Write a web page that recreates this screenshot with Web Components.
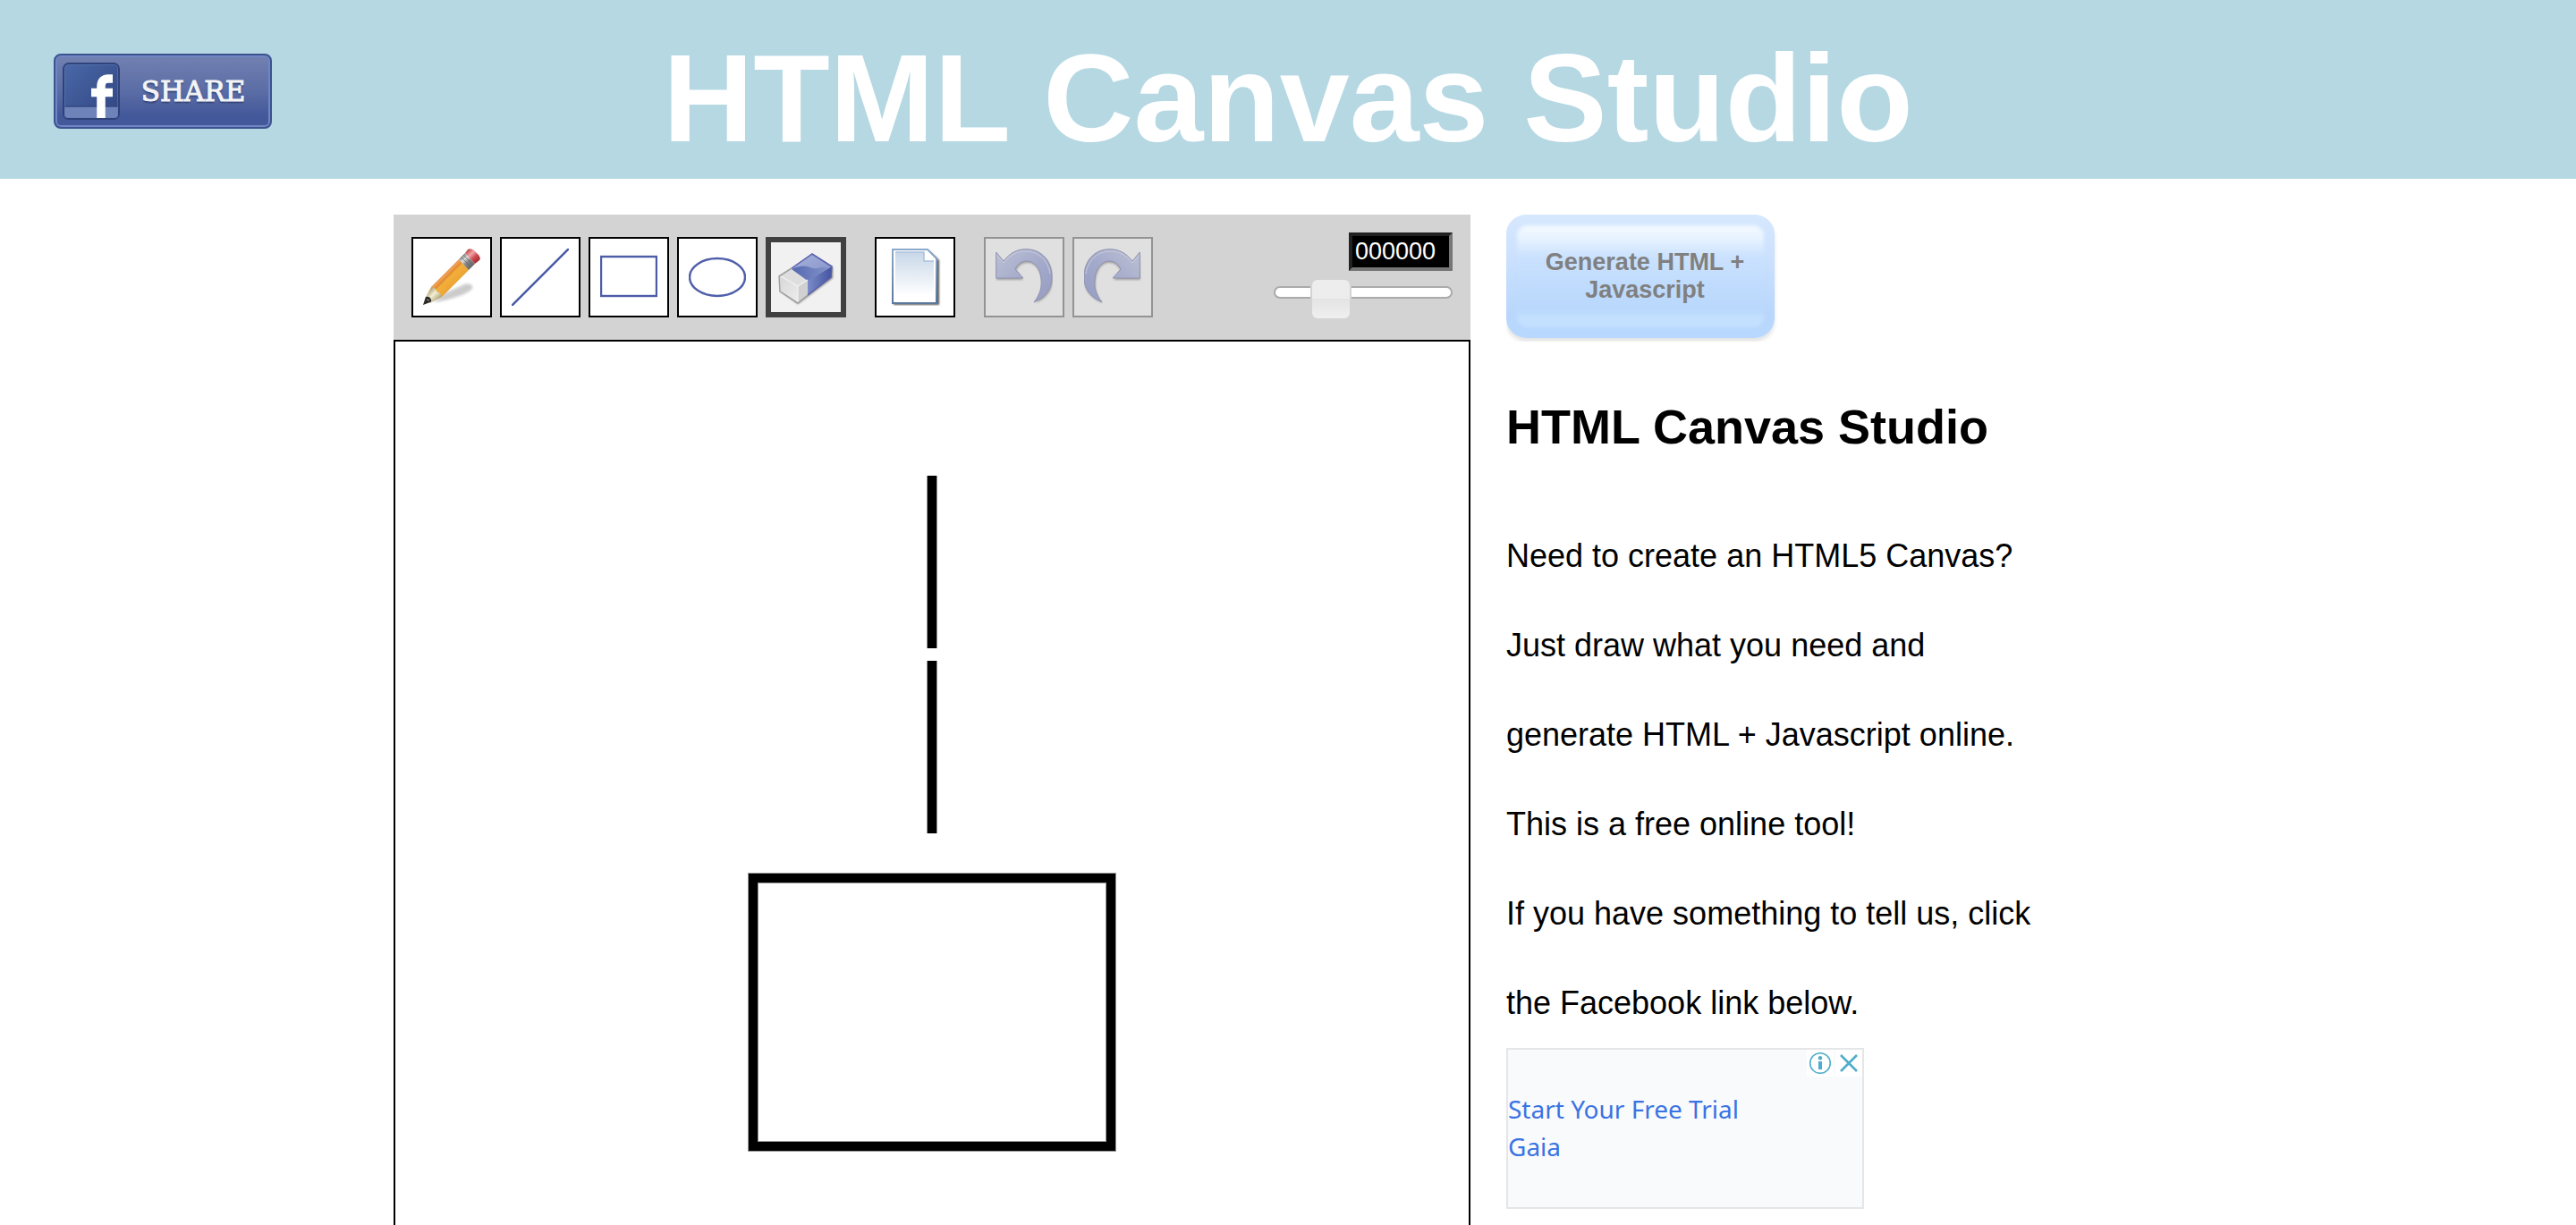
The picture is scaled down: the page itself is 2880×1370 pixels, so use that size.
<!DOCTYPE html>
<html lang="en">
<head>
<meta charset="utf-8">
<title>HTML Canvas Studio</title>
<style>
  html, body { height: 100%; }
  body { margin: 0; background: #fff; color: #000; font-family: "Liberation Sans", Arial, sans-serif; }
</style>
</head>
<body>
<studio-app></studio-app>

<script>
const define = (name, html) => {
  const template = document.createElement('template');
  template.innerHTML = html;
  customElements.define(name, class extends HTMLElement {
    constructor() {
      super();
      this.attachShadow({ mode: 'open' }).append(template.content.cloneNode(true));
    }
    connectedCallback() {
      const label = this.getAttribute('label');
      const button = this.shadowRoot.querySelector('button');
      if (label && button) button.setAttribute('aria-label', label);
      if (button && this.hasAttribute('disabled')) button.disabled = true;
    }
  });
};

define('share-link', `
<style>
  :host { display: block; }
  a { box-sizing: border-box; display: flex; align-items: center; width: 244px; height: 84px; border: 2px solid #3b5391; border-radius: 8px;
      background: linear-gradient(#7281b1, #5b6da6 50%, #43589a 85%); box-shadow: inset 0 0 0 2px #6f86c2;
      color: #f4f4f6; text-decoration: none; font: 31px/40px "DejaVu Serif", serif; text-shadow: 0 2px 2px #2b3a68; -webkit-text-stroke: 1px #f4f4f6; }
  svg { width: 64px; height: 64px; margin-left: 8px; }
  span { flex: 1; text-align: center; padding-right: 4px; }
</style>
<a href="#share">
  <svg viewBox="0 0 64 64" aria-hidden="true">
    <defs><linearGradient id="b" x1="0" y1="0" x2="1" y2="1"><stop offset="0" stop-color="#4b68a8"/><stop offset="1" stop-color="#2f4580"/></linearGradient></defs>
    <rect x="1" y="1" width="62" height="62" rx="6" fill="url(#b)" stroke="#2f4279" stroke-width="2"/>
    <path d="M2 49H62V58Q62 62 58 62H6Q2 62 2 58Z" fill="#6f83bb"/>
    <path d="M2 49H62" stroke="#33477f" stroke-width="1.5"/>
    <rect x="2.500" y="2.500" width="59" height="59" rx="4" fill="none" stroke="#6079b4" stroke-opacity=".6"/>
    <path d="M43 62V27Q43 18 51 18H56M32 33.500H56" fill="none" stroke="#fff" stroke-width="9.500"/>
  </svg>
  <span>SHARE</span>
</a>`);

define('site-header', `
<style>
  :host { display: grid; grid-template-columns: 1fr auto 1fr; height: 200px; background: #b5d8e3; }
  share-link { padding: 60px; }
  h1 { margin: 0; padding-top: 20px; color: #fff; font-size: 140px; line-height: 180px; font-weight: bold; white-space: nowrap; }
</style>
<share-link></share-link>
<h1><slot></slot></h1>`);

define('tool-button', `
<style>
  :host { display: block; }
  button { display: flex; align-items: center; justify-content: center; box-sizing: border-box; width: 90px; height: 90px; padding: 0;
           border: 2px solid #000; background: #fff; }
  :host([selected]) button { border: 6px solid #404040; background: #f1f1f1; }
  :host([disabled]) button { border-color: #939393; background: #e0e0e0; }
  ::slotted(svg) { display: block; width: 64px; height: 64px; }
</style>
<button type="button"><slot></slot></button>`);

define('pen-settings', `
<style>
  :host { display: flex; flex-direction: column; align-items: flex-end; gap: 17px; }
  input { box-sizing: border-box; margin: 0; }
  .color { width: 116px; height: 43px; padding: 0 3px; border: 4px solid; border-color: #222 #767676 #767676 #222; background: #000; color: #fff;
           font: 27px/35px "Liberation Sans", Arial, sans-serif; }
  .rail { box-sizing: border-box; width: 200px; height: 14px; border: 2px solid #aaa; border-radius: 7px; background: #fff; }
  .size { appearance: none; display: block; width: 200px; height: 10px; margin: 0 -2px; background: none; }
  .size::-webkit-slider-runnable-track { height: 10px; background: none; }
  .size::-webkit-slider-thumb { appearance: none; box-sizing: border-box; width: 46px; height: 47px; margin-top: -11px;
           border: 2px solid #d3d3d3; border-radius: 8px; background: linear-gradient(#ededed 50%, #e4e4e4 50%, #efefef); }
</style>
<input class="color" type="text" value="000000" aria-label="Colour">
<div class="rail"><input class="size" type="range" min="0" max="15" value="4" aria-label="Line width"></div>`);

define('tool-bar', `
<style>
  :host { display: flex; justify-content: space-between; box-sizing: border-box; height: 140px; padding: 20px; background: #d3d3d3; }
  .tools { display: flex; gap: 32px; padding-top: 5px; }
  .group { display: flex; gap: 9px; }
</style>
<div class="tools">
  <div class="group">
    <tool-button label="Pencil"><svg viewBox="0 0 64 64">
      <defs>
        <linearGradient id="wood" x1="22" y1="26" x2="38" y2="42" gradientUnits="userSpaceOnUse"><stop offset="0" stop-color="#d0701f"/><stop offset=".2" stop-color="#f0a35a"/><stop offset=".32" stop-color="#e08a2c"/><stop offset=".42" stop-color="#f3ae3e"/><stop offset=".8" stop-color="#eda632"/><stop offset="1" stop-color="#b87528"/></linearGradient>
        <linearGradient id="metal" x1="43" y1="8" x2="55" y2="21" gradientUnits="userSpaceOnUse"><stop offset="0" stop-color="#777"/><stop offset=".3" stop-color="#ddd"/><stop offset=".55" stop-color="#888"/><stop offset="1" stop-color="#666"/></linearGradient>
        <linearGradient id="rubber" x1="49" y1="2" x2="61" y2="15" gradientUnits="userSpaceOnUse"><stop offset="0" stop-color="#c04444"/><stop offset=".35" stop-color="#f0a6a6"/><stop offset=".65" stop-color="#d04a50"/><stop offset="1" stop-color="#a02c34"/></linearGradient>
        <linearGradient id="cone" x1="7" y1="47" x2="18" y2="58" gradientUnits="userSpaceOnUse"><stop offset="0" stop-color="#b9ab7c"/><stop offset=".4" stop-color="#f3eed8"/><stop offset="1" stop-color="#a59a66"/></linearGradient>
        <filter id="soft"><feGaussianBlur stdDeviation="1.500"/></filter>
      </defs>
      <path d="M12 60C28 58 50 51 55 45C57 40 50 38 44 41L24 50Z" fill="#000" opacity=".2" filter="url(#soft)"/>
      <path d="M9 43L40 12L51 24L21 54Z" fill="url(#wood)"/>
      <path d="M9 43Q14 43 15 48Q20 49 21 54L8 61L2 56Z" fill="url(#cone)"/>
      <path d="M40 12L47 5L58 17L51 24Z" fill="url(#metal)"/>
      <path d="M42.500 9.500L54 21M45 7L56 19" stroke="#555" stroke-width=".6"/>
      <path d="M47 5L50 1Q53 -1 57 2L62 7Q65 11 63 13L58 17Z" fill="url(#rubber)"/>
      <path d="M0 63L3 54Q7 53 8.500 56Q10 59 8 60Z" fill="#2b2b26"/>
      <path d="M4 57L7 58" stroke="#999" stroke-width="1"/>
    </svg></tool-button>
    <tool-button label="Line"><svg viewBox="0 0 64 64"><path d="M0 64L64 0" stroke="#4859a6" stroke-width="2.500"/></svg></tool-button>
    <tool-button label="Rectangle"><svg viewBox="0 0 64 64"><rect x="1" y="9" width="62" height="44" fill="none" stroke="#4c5ca8" stroke-width="2.400"/></svg></tool-button>
    <tool-button label="Ellipse"><svg viewBox="0 0 64 64"><ellipse cx="32" cy="32" rx="31" ry="21" fill="none" stroke="#4f5fa9" stroke-width="2.400"/></svg></tool-button>
    <tool-button label="Eraser" selected><svg viewBox="0 0 64 64">
      <defs>
        <linearGradient id="blue" x1="0" y1="0" x2="1" y2="1"><stop offset="0" stop-color="#a9b3da"/><stop offset="1" stop-color="#8090c8"/></linearGradient>
        <linearGradient id="band" x1="0" y1="0" x2="1" y2="0"><stop offset="0" stop-color="#5468b0"/><stop offset="1" stop-color="#8493ca"/></linearGradient>
        <linearGradient id="side" x1="0" y1="0" x2="1" y2="0"><stop offset="0" stop-color="#7b8cc9"/><stop offset="1" stop-color="#4353a0"/></linearGradient>
        <linearGradient id="white" x1="0" y1="0" x2="1" y2="1"><stop offset="0" stop-color="#d4d4d4"/><stop offset="1" stop-color="#f2f2f2"/></linearGradient>
        <filter id="drop" x="-.2" y="-.2" width="1.400" height="1.400"><feGaussianBlur stdDeviation="1.200"/></filter>
      </defs>
      <path d="M4 48L23 62L62 33V20Z" fill="#444" opacity=".65" filter="url(#drop)"/>
      <path d="M2 30L16 24L34 35V49L23 61L3 48Z" fill="url(#white)"/>
      <path d="M2 30L16 21L34 35L23 42Z" fill="#dedede"/>
      <path d="M23 42L34 35V52L23 61Z" fill="#d0d0d0"/>
      <path d="M16 22L39 6L61 20L34 36Z" fill="url(#blue)"/>
      <path d="M16 23Q26 18 34 20Q42 24 49 21L58 21L34 36Z" fill="url(#band)"/>
      <path d="M34 36L61 20L60 32L34 52Z" fill="url(#side)"/>
      <path d="M4 31L23 42L34 35M23 42V60" fill="none" stroke="#f2f2f2" stroke-width="1.200"/>
      <path d="M16 22L2 31L3 48L23 61L34 52" fill="none" stroke="#a2a2a2" stroke-width="1.500"/>
      <path d="M16 22L39 6L61 20L60 32L34 52" fill="none" stroke="#5a5fae" stroke-width="1.500"/>
    </svg></tool-button>
  </div>
  <tool-button label="New"><svg viewBox="0 0 64 64">
    <defs>
      <linearGradient id="sheet" x1="0" y1="0" x2="0" y2="1"><stop offset="0" stop-color="#c8d7e8"/><stop offset=".9" stop-color="#fff"/></linearGradient>
      <linearGradient id="edge" x1="0" y1="0" x2="0" y2="1"><stop offset="0" stop-color="#8ba9cb"/><stop offset="1" stop-color="#5c789c"/></linearGradient>
      <filter id="shade"><feGaussianBlur stdDeviation="1"/></filter>
    </defs>
    <path d="M8 3H48L59 13V63H8Z" fill="#333" opacity=".8" filter="url(#shade)"/>
    <path d="M7 1H46L56 11V61H7Z" fill="#fff" stroke="url(#edge)" stroke-width="2"/>
    <path d="M10 4H42V14H53V58H10Z" fill="url(#sheet)"/>
    <path d="M10 4H42V14H53" fill="none" stroke="#a9c0db" stroke-width="1.500"/>
  </svg></tool-button>
  <div class="group">
    <tool-button label="Undo" disabled><svg viewBox="0 0 64 64">
      <defs><linearGradient id="undo" x1="0" y1="0" x2="1" y2="1"><stop offset="0" stop-color="#bdc1d6"/><stop offset=".5" stop-color="#a4aaca"/><stop offset="1" stop-color="#979dc4"/></linearGradient><filter id="us"><feGaussianBlur stdDeviation="1.300"/></filter></defs>
      <path d="M1 6L9 16C16 7 24 2 34 2C52 2 64 16 64 34C64 48 56 56 45 61C52 53 53 44 52 36C51 24 44 16 36 16C30 16 26 19 23 25L31 35H1Z" fill="#000" opacity=".28" filter="url(#us)"/>
      <path d="M.700 4L9 14C16 5 24 .700 34 .700C52 .700 63 14 63 32C63 46 55 55 43 60C50 51 52 42 51 34C50 22 43 14 35 14C29 14 25 17 22 23L31 33H.700Z" fill="url(#undo)" stroke="#9094b0"/>
      <path d="M2 8L9 16C16 7 24 3 34 3C48 3 59 14 61 28" fill="none" stroke="#c9ccdc"/>
    </svg></tool-button>
    <tool-button label="Redo" disabled><svg viewBox="0 0 64 64">
      <defs><linearGradient id="redo" x1="0" y1="0" x2="1" y2="1"><stop offset="0" stop-color="#bdc1d6"/><stop offset=".5" stop-color="#a4aaca"/><stop offset="1" stop-color="#979dc4"/></linearGradient><filter id="rs"><feGaussianBlur stdDeviation="1.300"/></filter></defs>
      <g transform="matrix(-1 0 0 1 63 0)"><path d="M1 6L9 16C16 7 24 2 34 2C52 2 63 16 63 34C63 48 54 56 42 61C50 53 51 44 50 36C49 24 43 16 35 16C29 16 25 19 22 25L30 35H0Z" fill="#000" opacity=".28" filter="url(#rs)"/>
      <path d="M.700 4L9 14C16 5 24 .700 34 .700C52 .700 63 14 63 32C63 46 55 55 43 60C50 51 52 42 51 34C50 22 43 14 35 14C29 14 25 17 22 23L31 33H.700Z" fill="url(#redo)" stroke="#9094b0"/>
      <path d="M2 8L9 16C16 7 24 3 34 3C48 3 59 14 61 28" fill="none" stroke="#c9ccdc"/></g>
    </svg></tool-button>
  </div>
</div>
<pen-settings></pen-settings>`);

define('drawing-sheet', `
<style>
  :host { display: block; box-sizing: border-box; min-height: 0; overflow: hidden; border: 2px solid #000; border-bottom: 0; background: #fff; }
  svg { display: block; width: 100%; }
  g { fill: none; stroke: #000; }
</style>
<svg viewBox="0 0 1200 1200" role="img" aria-label="Drawing">
  <g stroke-width="12" opacity=".4">
    <path d="M600 150V343M600 357V550"/>
    <rect x="400" y="600" width="400" height="300"/>
  </g>
  <g stroke-width="10">
    <path d="M600 150V343M600 357V550"/>
    <rect x="400" y="600" width="400" height="300"/>
  </g>
</svg>`);

define('generate-button', `
<style>
  :host { display: block; height: 142px; overflow: hidden; }
  button { box-sizing: border-box; display: flex; align-items: center; justify-content: center; width: 300px; height: 138px; padding: 0 0 0 10px; border: 0; border-radius: 22px;
    background: linear-gradient(#d6e8fe, #cbe1fe 35%, #b9d7fc 80%, #b8d8ff); box-shadow: 0 4px 4px #e4e4e4; position: relative; z-index: 0;
    color: #808080; font: bold 27px/31px "Liberation Sans", Arial, sans-serif; text-align: center; }
  button::before { content: ""; position: absolute; z-index: -1; inset: 12px; border-radius: 12px; filter: blur(2px);
    background: linear-gradient(#f5faff, #e6f2ff 14%, #cbe2fe 30%, #bfdbfd 60%, #b9d8fc 84%, #c4e1ff 90%, #c3e0ff); }
</style>
<button type="button"><span><slot></slot></span></button>`);

define('ad-card', `
<style>
  :host { display: flex; justify-content: space-between; box-sizing: border-box; width: 400px; height: 180px; border: 2px solid #e5e6e8; background: #f9fafc; }
  a { padding-top: 45px; color: #3a73e3; font: 28px/42px "Noto Sans", "Open Sans", sans-serif; text-decoration: none; }
  .controls { display: flex; gap: 2px; }
  button { width: 30px; height: 30px; padding: 0; border: 0; background: #fff; }
  svg { display: block; width: 30px; height: 30px; fill: none; stroke: #4fadcb; stroke-width: 2; }
</style>
<a href="#ad"><slot></slot></a>
<div class="controls">
  <button type="button" aria-label="Ad information"><svg viewBox="0 0 30 30"><circle cx="15" cy="15" r="11.300" stroke-width="1.600"/><circle cx="15" cy="9.300" r="2.200" fill="#4fadcb" stroke="none"/><path d="M15 13V22" stroke-width="4"/></svg></button>
  <button type="button" aria-label="Close ad"><svg viewBox="0 0 30 30"><path d="M6 6L24 24M24 6L6 24" stroke-width="2.600"/></svg></button>
</div>`);

define('info-panel', `
<style>
  :host { display: block; }
  h2 { margin: 45px 0; font-size: 54px; line-height: 100px; }
  p { margin: 0; font-size: 36px; line-height: 100px; }
</style>
<generate-button>Generate HTML +<br>Javascript</generate-button>
<h2>HTML Canvas Studio</h2>
<p>Need to create an HTML5 Canvas?<br>Just draw what you need and<br>generate HTML + Javascript online.<br>This is a free online tool!<br>If you have something to tell us, click<br>the Facebook link below.</p>
<ad-card>Start Your Free Trial<br>Gaia</ad-card>`);

define('studio-app', `
<style>
  :host { display: flex; flex-direction: column; height: 100vh; overflow: hidden; }
  site-header { flex: none; }
  main { flex: 1; min-height: 0; box-sizing: border-box; width: 100%; max-width: 2000px; margin: 0 auto; padding-top: 40px; display: flex; gap: 40px; }
  .editor { flex: none; width: 1204px; display: flex; flex-direction: column; }
  tool-bar { flex: none; }
  drawing-sheet, info-panel { flex: 1; }
</style>
<site-header>HTML Canvas Studio</site-header>
<main>
  <div class="editor"><tool-bar></tool-bar><drawing-sheet></drawing-sheet></div>
  <info-panel></info-panel>
</main>`);
</script>
</body>
</html>
